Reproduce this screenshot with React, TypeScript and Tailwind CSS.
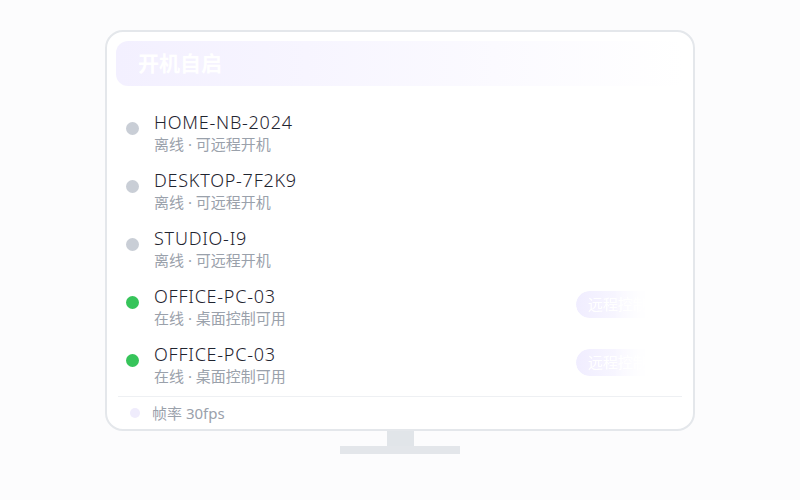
import React from 'react';

interface Device {
  name: string;
  online: boolean;
}

const devices: Device[] = [
  { name: 'HOME-NB-2024', online: false },
  { name: 'DESKTOP-7F2K9', online: false },
  { name: 'STUDIO-I9', online: false },
  { name: 'OFFICE-PC-03', online: true },
  { name: 'OFFICE-PC-03', online: true },
];

const font = { fontFamily: '"Noto Sans", "Noto Sans CJK SC", sans-serif' };

const DeviceRow: React.FC<{ device: Device }> = ({ device }) => (
  <div className="h-[58px] flex items-center pl-[10px] pr-[24px]">
    <div
      className={
        device.online
          ? 'w-[13px] h-[13px] -mt-[10px] rounded-full bg-[#36c45a]'
          : 'w-[13px] h-[13px] -mt-[10px] rounded-full bg-[#c9ced6]'
      }
    />
    <div className="ml-[15px] flex flex-col flex-1">
      <span className="text-[18px] leading-[22px] -mt-[1px] font-light tracking-[0.75px] text-[#1f2430]">{device.name}</span>
      <span className="text-[15px] leading-[22px] text-[#9aa1ab]">
        {device.online ? '在线 · 桌面控制可用' : '离线 · 可远程开机'}
      </span>
    </div>
    {device.online && (
      <div className="w-[84px] h-[27px] -mt-[6px] rounded-full bg-gradient-to-r from-[#f0edff] to-white flex items-center pl-[12px] text-white text-[15px] [mask-image:linear-gradient(to_right,black_45%,transparent_90%)]">
        远程控制
      </div>
    )}
  </div>
);

export default function App() {
  return (
    <div className="w-[800px] h-[500px] bg-[#fcfcfd] pt-[30px]" style={font}>
      <div className="w-[590px] h-[401px] mx-auto border-2 border-[#e4e7eb] rounded-[18px] bg-white px-[9px] pt-[9px] flex flex-col">
        <div className="h-[45px] rounded-[12px] bg-gradient-to-r from-[#f3f0ff] to-white flex items-center px-[22px] text-white text-[21px] font-bold">
          开机自启
        </div>
        <div className="pt-[18px] flex flex-col">
          {devices.map((d, i) => (
            <DeviceRow key={i} device={d} />
          ))}
        </div>
        <div className="mx-[2px] mt-[2px] border-t border-[#eef0f3] h-[33px] flex items-center pl-[12px]">
          <div className="w-[10px] h-[10px] rounded-full bg-[#efecfc]" />
          <span className="ml-[12px] text-[15px] text-[#9aa1ab]">帧率 30fps</span>
        </div>
      </div>
      <div className="flex flex-col items-center">
        <div className="w-[27px] h-[15px] bg-[#e1e5e9]" />
        <div className="w-[120px] h-[8px] bg-[#e3e6ea]" />
      </div>
    </div>
  );
}
